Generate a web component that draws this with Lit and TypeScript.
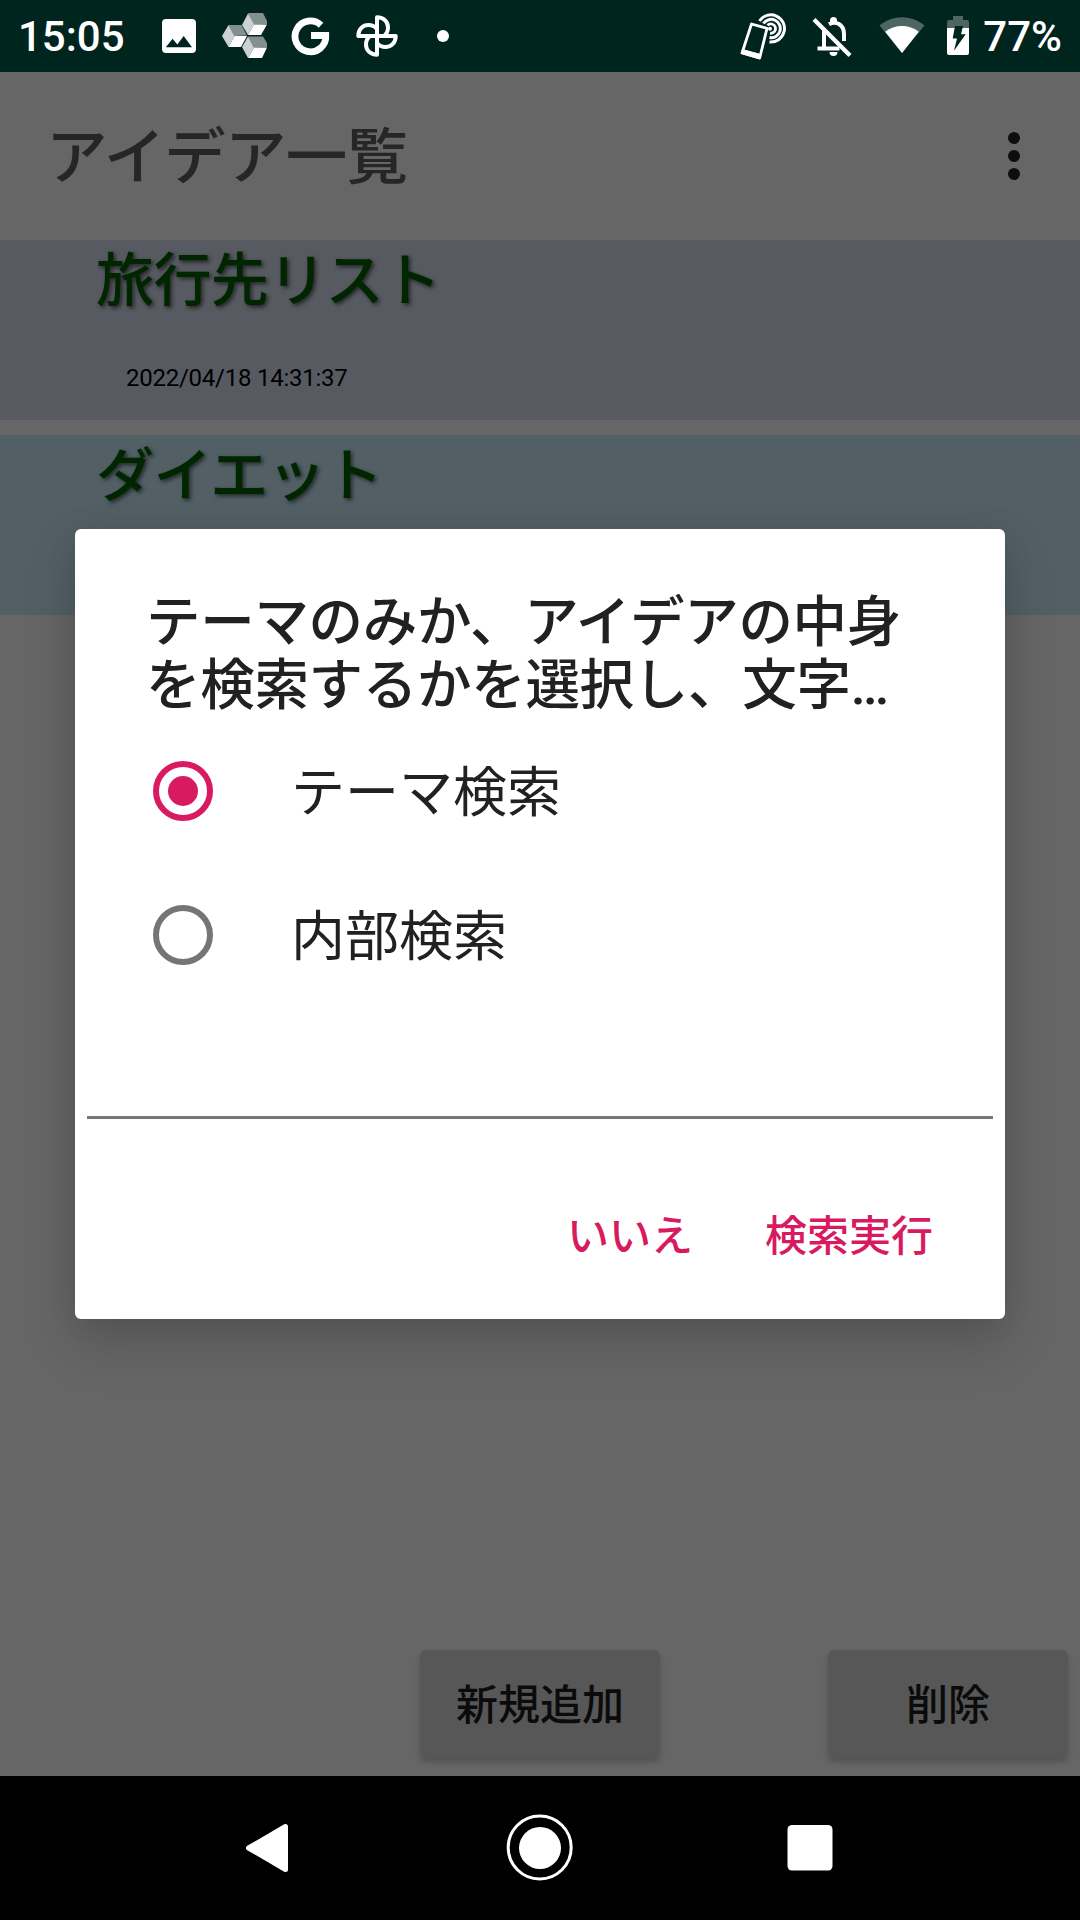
import { LitElement, html, svg, css } from "lit";
import { customElement, property, state } from "lit/decorators.js";

const base = css`
  * { box-sizing: border-box; }
  svg { display: block; flex: none; }
`;

@customElement("status-bar")
class StatusBar extends LitElement {
  static styles = [base, css`
    :host { display: flex; align-items: center; justify-content: space-between; height: 72px; background: #00241e; color: #fff;
      font: 500 42px/72px Roboto, "Noto Sans CJK JP", sans-serif; }
    .left, .right { display: flex; align-items: center; height: 72px; }
    .left { padding-left: 18px; }
    .right { padding-right: 18px; }
    .clock { width: 137px; }
    .clock, .charge { padding-top: 2px; }
    .icons { display: flex; gap: 18px; }
    .right .icons { gap: 21px; }
    .battery { margin: 0 13px 0 20px; }
  `];

  render() {
    return html`
      <div class="left">
        <span class="clock">15:05</span>
        <div class="icons">
          <svg width="48" height="48" viewBox="155 12 48 48" fill="#fff">
            <path fill-rule="evenodd" d="M166 19H192a4 4 0 0 1 4 4V49a4 4 0 0 1-4 4H166a4 4 0 0 1-4-4V23a4 4 0 0 1 4-4zM172.600 38.800L177.300 44.500L183.700 36L192 47.300H165.800z"/>
          </svg>
          <svg width="48" height="48" viewBox="221 12 48 48">
            <path fill="#82918e" d="M248 13H263L267 21V24L260 24.500H252.500z"/>
            <path fill="#cbd2d1" d="M248 13.500L254 24.500L248 35L242 25z"/>
            <path fill="#fff" d="M254 24.500H267L261 35H248z"/>
            <path fill="#82918e" d="M228.500 25H241.500L247 35.500L234.500 36z"/>
            <path fill="#cbd2d1" d="M228.500 25L234.500 36L228.500 47L222 36z"/>
            <path fill="#fff" d="M234.500 36H247L241 47H228.500z"/>
            <path fill="#82918e" d="M248 36.500H263L267 43V47L254 47.500z"/>
            <path fill="#cbd2d1" d="M248 36.500L254 47.500L248 58L242 47z"/>
            <path fill="#fff" d="M254 47.500H267L262 58H248z"/>
          </svg>
          <svg width="48" height="48" viewBox="287 12 48 48" fill="none" stroke="#fff" stroke-width="6.800">
            <path d="M321 25.200A15.400 15.400 0 1 0 325.800 35.500H311"/>
          </svg>
          <svg width="48" height="48" viewBox="353 12 48 48" fill="none" stroke="#fff" stroke-width="4" stroke-linejoin="round">
            ${[0, 90, 180, 270].map(a => svg`<path transform="rotate(${a} 377 36)" d="M377 36V17.300C384 17.300 388 22 388 27.500C388 31 386.500 34 384 36"/>`)}
          </svg>
          <svg width="48" height="48" viewBox="419 12 48 48"><circle cx="443" cy="36" r="6" fill="#fff"/></svg>
        </div>
      </div>
      <div class="right">
        <div class="icons">
          <svg width="48" height="48" viewBox="740 12 48 48" fill="none" stroke="#fff">
            <path stroke-width="2.800" stroke-linejoin="round" d="M751.500 24L767 28.300L759.700 58L742 53z"/>
            <path fill="#fff" stroke="#fff" stroke-width="1" stroke-linejoin="round" d="M742.500 49.500L760.800 54.500L759.700 59L741.500 53.500z"/>
            <path stroke-width="3" d="M759.500 21A13.600 13.600 0 1 1 769.500 42M763.400 23.500A9.200 9.200 0 1 1 769.500 37.600"/>
            <path stroke-width="2.800" d="M767.500 25.300A4.700 4.700 0 1 1 770 33.200"/>
            <circle cx="770" cy="28.800" r="2" fill="#fff" stroke="none"/>
          </svg>
          <svg width="48" height="48" viewBox="809.500 12 48 48" fill="none" stroke="#fff" stroke-width="4">
            <path d="M824.500 29V48M818 48.500H840M829.500 24.200C836 20.500 844.500 24 844.500 34V41"/>
            <path stroke-width="4.200" d="M814.500 19.500L850.500 55.500"/>
            <path fill="#fff" stroke="none" d="M830.500 22V20.500a3.500 3.500 0 0 1 7 0V23zM830 52H838a4 4 0 0 1-8 0z"/>
          </svg>
          <svg width="48" height="48" viewBox="878.500 12 48 48">
            <path fill="#4d6662" d="M902.500 53L880 25.500C893.500 14.500 911.500 14.500 925 25.500z"/>
            <path fill="#fff" d="M902.500 53L885.700 31.800C895.500 24 909.500 24 919.300 31.800z"/>
          </svg>
        </div>
        <svg class="battery" width="24" height="48" viewBox="946 12 24 48">
          <path fill="#4d6662" d="M953 16H963V20H967a2 2 0 0 1 2 2V28H947V22a2 2 0 0 1 2-2H953z"/>
          <path fill="#fff" d="M947 28H969V53a2 2 0 0 1-2 2H949a2 2 0 0 1-2-2z"/>
          <path fill="#00241e" d="M955 26H963L961 34.300H965.700L954 50.700L957 38.500H952.700z"/>
        </svg>
        <span class="charge">77%</span>
      </div>`;
  }
}

@customElement("idea-row")
class IdeaRow extends LitElement {
  @property() heading = "";
  @property() date = "";
  static styles = [base, css`
    :host { display: flex; flex-direction: column; height: 180px; padding-left: 96px;
      font-family: Roboto, "Noto Sans CJK JP", sans-serif; }
    .heading { padding-top: 1px; height: 80px; font-size: 58px; letter-spacing: -.6px; line-height: 80px; font-weight: 500; color: #002600; text-shadow: 2px 2px 4px rgba(0,0,0,.6); }
    .date { margin: 43px 0 0 30px; font-size: 24px; line-height: 30px; color: #000; letter-spacing: -.25px; }
  `];
  render() {
    return html`<div class="heading">${this.heading}</div><div class="date">${this.date}</div>`;
  }
}

@customElement("search-dialog")
class SearchDialog extends LitElement {
  @state() private choice = 0;
  static styles = [base, css`
    :host { display: flex; flex-direction: column; width: 930px; height: 790px; background: #fff; border-radius: 6px; color: #212121;
      box-shadow: 0 24px 54px rgba(0,0,0,.17), 0 0 30px rgba(0,0,0,.08);
      font-family: Roboto, "Noto Sans CJK JP", sans-serif; }
    .title { margin: 0; padding: 62px 71px 0; height: 190px; font-size: 54.500px; letter-spacing: -.3px; line-height: 63px; font-weight: 500; white-space: nowrap; }
    .option { display: flex; align-items: center; gap: 78px; height: 144px; padding-left: 78px; font-size: 54px; line-height: 138px; }
    .option span { padding-top: 6px; }
    .field { margin: 109px 12px 0; height: 3px; background: #767676; }
    .actions { display: flex; justify-content: flex-end; gap: 72px; padding: 88px 72px 0 0; font-size: 42px; line-height: 60px; font-weight: 500; color: #d81b60; }
  `];
  render() {
    return html`
      <h2 class="title">テーマのみか、アイデアの中身<br>を検索するかを選択し、文字…</h2>
      ${["テーマ検索", "内部検索"].map((label, i) => html`
        <div class="option" @click=${() => { this.choice = i; }}>
          <svg width="60" height="60" viewBox="0 0 60 60">
            <circle cx="30" cy="30" r="27" fill="none" stroke-width="6" stroke=${this.choice === i ? "#d81b60" : "#757575"}/>
            ${this.choice === i ? svg`<circle cx="30" cy="30" r="15" fill="#d81b60"/>` : null}
          </svg>
          <span>${label}</span>
        </div>`)}
      <div class="field"></div>
      <div class="actions"><span>いいえ</span><span>検索実行</span></div>`;
  }
}

@customElement("app-root")
class AppRoot extends LitElement {
  static styles = [base, css`
    :host { position: relative; display: flex; flex-direction: column; width: 1080px; height: 1920px; overflow: hidden; background: #666;
      font-family: Roboto, "Noto Sans CJK JP", sans-serif; }
    .header { display: flex; align-items: center; justify-content: space-between; height: 168px; padding: 0 60px 0 46px; }
    .header h1 { margin: 0; padding-top: 5px; font-size: 61.500px; letter-spacing: -.8px; line-height: 163px; font-weight: 500; color: #262626; }
    .list { display: flex; flex-direction: column; gap: 15px; flex: 1; }
    .lavender { background: #585a62; }
    .teal { background: #526066; }
    .buttons { display: flex; justify-content: flex-end; gap: 168px; padding: 0 12px 18px 0; }
    .button { width: 240px; height: 108px; border-radius: 6px; background: #575757; color: #0b0b0b; text-align: center;
      font-size: 42px; line-height: 112px; font-weight: 500; box-shadow: 0 4px 6px rgba(0,0,0,.2); }
    .nav { display: flex; justify-content: center; align-items: center; gap: 198px; height: 144px; background: #000; }
    .dialog { position: absolute; left: 75px; top: 529px; }
  `];
  render() {
    return html`
      <status-bar></status-bar>
      <div class="header">
        <h1>アイデア一覧</h1>
        <svg width="12" height="48" viewBox="0 0 12 48" fill="#0d0d0d"><circle cx="6" cy="6" r="6"/><circle cx="6" cy="24" r="6"/><circle cx="6" cy="42" r="6"/></svg>
      </div>
      <div class="list">
        <idea-row class="lavender" heading="旅行先リスト" date="2022/04/18 14:31:37"></idea-row>
        <idea-row class="teal" heading="ダイエット"></idea-row>
      </div>
      <div class="buttons"><div class="button">新規追加</div><div class="button">削除</div></div>
      <div class="nav">
        <svg width="72" height="72" viewBox="234 1812 72 72"><path fill="#fff" stroke="#fff" stroke-width="5" stroke-linejoin="round" d="M248.500 1848L285.500 1826.500V1869.500z"/></svg>
        <svg width="72" height="72" viewBox="504 1812 72 72"><circle cx="539.700" cy="1847.500" r="31.500" fill="none" stroke="#fff" stroke-width="3"/><circle cx="540" cy="1848" r="21" fill="#fff"/></svg>
        <svg width="72" height="72" viewBox="774 1812 72 72"><rect x="787.500" y="1825" width="45" height="45.500" rx="4.500" fill="#fff"/></svg>
      </div>
      <search-dialog class="dialog"></search-dialog>`;
  }
}
